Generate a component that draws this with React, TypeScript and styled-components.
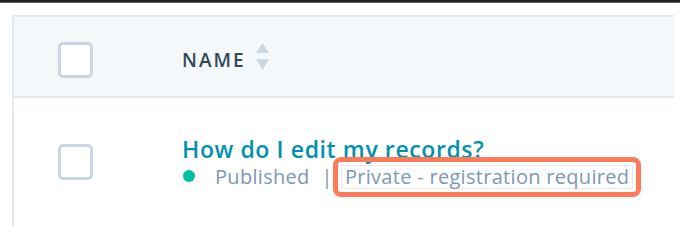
import { ReactElement } from "react";

import styled, { createGlobalStyle } from "styled-components";

const GlobalStyle = createGlobalStyle`
  html, body {
    margin: 0;
    padding: 0;
    background-color: #fff;
  }

  body {
    font-family: "Open Sans", "Noto Sans", "Liberation Sans", sans-serif;
    width: 680px;
    height: 234px;
    overflow: hidden;
  }
`;

const TopBar = styled.div`
  height: 3px;
  background: linear-gradient(#1e1e1e 0, #2a2a2a 66%, #8a8a8a 100%);
`;

const Table = styled.div`
  margin: 12px 0 0 12px;
  width: 660px;
  border-left: 2px solid #e5e9f0;
  height: 211px;
`;

const Row = styled.div<{ header?: boolean }>`
  display: grid;
  grid-template-columns: 168px 1fr;
  align-items: center;
  height: ${({ header }) => (header ? "79px" : "128px")};
  background-color: ${({ header }) => (header ? "#f5f8fa" : "#fff")};
  border-top: ${({ header }) => (header ? "2px solid #e5e9f0" : "none")};
  border-bottom: ${({ header }) => (header ? "2px solid #e5e9f0" : "none")};
`;

const CheckCell = styled.div<{ offset?: number }>`
  padding-left: 44px;
  padding-top: ${({ offset }) => offset ?? 0}px;
  display: flex;
`;

const Checkbox = styled.span`
  box-sizing: border-box;
  width: 35px;
  height: 36px;
  border: 3px solid #cbd6e2;
  border-radius: 5px;
  background-color: #fff;
`;

const HeaderLabel = styled.div`
  display: flex;
  align-items: center;
  gap: 10px;
  padding-top: 6px;
  color: #33475b;
  font-size: 19px;
  font-weight: 600;
  letter-spacing: 2px;
  text-transform: uppercase;
`;

const SortIcon = styled.svg`
  display: block;
  margin-bottom: 6px;
`;

const NameCell = styled.div`
  align-self: start;
  display: flex;
  flex-direction: column;
  padding-top: 39px;
`;

const Title = styled.a`
  color: #0091ae;
  font-size: 23px;
  font-weight: 600;
  letter-spacing: 0.6px;
  line-height: 24px;
  text-decoration: none;
`;

const Meta = styled.div`
  display: flex;
  align-items: center;
  margin-top: -4px;
  color: #7c98b6;
  font-size: 20px;
  letter-spacing: 0.3px;
  line-height: 22px;
`;

const Dot = styled.span`
  width: 12px;
  height: 12px;
  border-radius: 50%;
  background-color: #00bda5;
  margin: 0 20px 3px 1px;
`;

const Divider = styled.span`
  margin: 0 0 0 12px;
`;

const Highlight = styled.span`
  display: inline-flex;
  padding: 3px;
  border: 5px solid #ff7a59;
  border-radius: 8px;
`;

const Access = styled.span`
  padding: 0 3px;
  border: 1px solid #e3e9f0;
`;

const App = (): ReactElement => {
  return (
    <>
      <GlobalStyle />
      <TopBar />
      <Table>
        <Row header>
          <CheckCell offset={6}>
            <Checkbox />
          </CheckCell>
          <HeaderLabel>
            <span>Name</span>
            <SortIcon width="13" height="27" viewBox="0 0 13 27">
              <path d="M6.5 0 L13 10 L0 10 Z" fill="#cbd6e2" />
              <path d="M0 16 L13 16 L6.5 27 Z" fill="#cbd6e2" />
            </SortIcon>
          </HeaderLabel>
        </Row>
        <Row>
          <CheckCell>
            <Checkbox />
          </CheckCell>
          <NameCell>
            <Title href="#">How do I edit my records?</Title>
            <Meta>
              <Dot />
              <span>Published</span>
              <Divider>|</Divider>
              <Highlight>
                <Access>Private - registration required</Access>
              </Highlight>
            </Meta>
          </NameCell>
        </Row>
      </Table>
    </>
  );
};

export default App;
